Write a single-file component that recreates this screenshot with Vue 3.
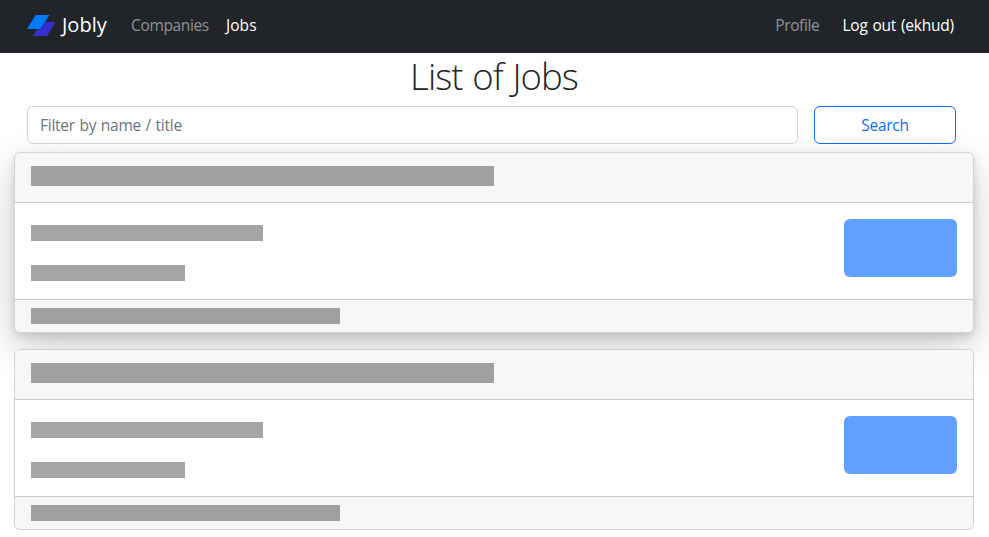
<script setup>
const jobs = [{ id: 1, raised: true }, { id: 2, raised: false }]
</script>

<template>
  <nav class="navbar">
    <a class="brand">
      <svg class="logo" width="30" height="24" viewBox="0 0 30 24">
        <path d="M8.7 2H22.3L13.7 16H0Z" fill="#007bff" />
        <path d="M18.3 9H28.5L20 23H6L9.9 16.6H14Z" fill="#3730cf" />
      </svg>
      <span class="brand-name">Jobly</span>
    </a>
    <a class="link companies">Companies</a>
    <a class="link jobs active">Jobs</a>
    <a class="link profile">Profile</a>
    <a class="link logout active">Log out (ekhud)</a>
  </nav>
  <main>
    <h1>List of Jobs</h1>
    <form class="search" @submit.prevent>
      <input type="text" placeholder="Filter by name / title" />
      <button>Search</button>
    </form>
    <article v-for="job in jobs" :key="job.id" class="card" :class="{ raised: job.raised }">
      <header><div class="bar title"></div></header>
      <section>
        <div class="details">
          <div class="bar salary"></div>
          <div class="bar equity"></div>
        </div>
        <div class="apply"></div>
      </section>
      <footer><div class="bar company"></div></footer>
    </article>
  </main>
</template>

<style>
body { background: #fff; font-family: "Open Sans", "Noto Sans", sans-serif; overflow: hidden; }
</style>

<style scoped>
* { box-sizing: border-box; }
.navbar { height: 53px; background: #212529; display: flex; align-items: center; padding: 0 35px 4px 27px; white-space: nowrap; }
.brand { display: flex; align-items: center; width: 104px; color: #fff; }
.logo { flex: none; margin-right: 5px; }
.brand-name { font-size: 20px; letter-spacing: 0; }
.link { font-size: 15.5px; color: #909294; letter-spacing: -0.35px; }
.active { color: #fff; }
.jobs { margin-left: 17px; letter-spacing: 0.1px; }
.profile { margin-left: auto; margin-right: 23px; }
.logout { letter-spacing: -0.2px; word-spacing: 0.9px; }
main { padding: 0 15px 0 14px; }
h1 { margin: 0; height: 53px; font-size: 36.5px; line-height: 47px; font-weight: 300; letter-spacing: -0.9px; word-spacing: 1px; text-align: center; color: #212529; }
.search { display: flex; gap: 16px; height: 38px; margin: 0 18px 8px 13px; }
input { flex: 1; min-width: 0; border: 1px solid #ced4da; border-radius: 6px; padding: 0 12px; font: 15.5px "Open Sans", sans-serif; letter-spacing: -0.25px; word-spacing: 0.8px; background: #fff; outline: 0; }
input::placeholder { color: #6c757d; opacity: 1; }
button { width: 142px; border: 1px solid #0d6efd; border-radius: 6px; background: #fff; color: #0d6efd; font: 15.5px "Open Sans", sans-serif; letter-spacing: -0.25px; padding: 0; }
.card { height: 181px; display: flex; flex-direction: column; border: 1px solid rgba(0, 0, 0, .175); border-radius: 6px; background: #fff; margin-bottom: 16px; overflow: hidden; }
.raised { box-shadow: 0 14px 40px rgba(0, 0, 0, .2), 0 4px 8px rgba(0, 0, 0, .12); }
header { height: 50px; padding: 13px 16px; background: #f7f7f7; border-bottom: 1px solid #cbcbcb; }
section { height: 96px; display: flex; justify-content: space-between; padding: 16px; }
footer { flex: 1; padding: 8px 16px; background: #f7f7f7; border-top: 1px solid #cbcbcb; }
.bar { background: #a0a0a0; height: 16px; }
.title { width: 463px; height: 20px; }
.details { padding-top: 6px; }
.details .bar { background: #a5a5a5; }
.salary { width: 232px; margin-bottom: 24px; }
.equity { width: 154px; }
.company { width: 309px; }
.apply { width: 113px; height: 58px; border-radius: 6px; background: #62a0ff; }
</style>
